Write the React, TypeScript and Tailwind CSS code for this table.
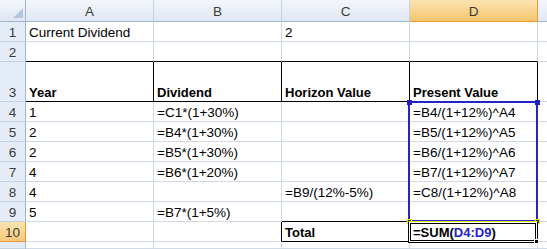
import React from 'react'

type Side = 'black' | undefined

type CellDef = {
  text?: React.ReactNode
  bold?: boolean
  r?: Side
  b?: Side
}

type RowDef = {
  n: number
  tall?: boolean
  short?: boolean
  active?: boolean
  cells: CellDef[]
}

const rows: RowDef[] = [
  { n: 1, cells: [{ text: 'Current Dividend' }, {}, { text: '2' }, {}] },
  { n: 2, cells: [{ b: 'black' }, { b: 'black' }, { b: 'black' }, { b: 'black' }] },
  {
    n: 3,
    tall: true,
    cells: [
      { text: 'Year', bold: true, r: 'black', b: 'black' },
      { text: 'Dividend', bold: true, r: 'black', b: 'black' },
      { text: 'Horizon Value', bold: true, r: 'black', b: 'black' },
      { text: 'Present Value', bold: true, r: 'black', b: 'black' },
    ],
  },
  { n: 4, cells: [{ text: '1' }, { text: '=C1*(1+30%)' }, {}, { text: '=B4/(1+12%)^A4' }] },
  { n: 5, cells: [{ text: '2' }, { text: '=B4*(1+30%)' }, {}, { text: '=B5/(1+12%)^A5' }] },
  { n: 6, cells: [{ text: '2' }, { text: '=B5*(1+30%)' }, {}, { text: '=B6/(1+12%)^A6' }] },
  { n: 7, cells: [{ text: '4' }, { text: '=B6*(1+20%)' }, {}, { text: '=B7/(1+12%)^A7' }] },
  { n: 8, cells: [{ text: '4' }, {}, { text: '=B9/(12%-5%)' }, { text: '=C8/(1+12%)^A8' }] },
  { n: 9, cells: [{ text: '5' }, { text: '=B7*(1+5%)' }, { b: 'black' }, { b: 'black' }] },
  {
    n: 10,
    active: true,
    cells: [
      {},
      { r: 'black' },
      { text: 'Total', bold: true, r: 'black', b: 'black' },
      {
        bold: true,
        b: 'black',
        text: (
          <>
            =SUM(<span className="text-[#2323c8]">D4:D9</span>)
          </>
        ),
      },
    ],
  },
  // only the top sliver of row 11 is in view
  { n: 11, short: true, cells: [{}, {}, {}, {}] },
]

function Cell({ cell }: { cell: CellDef }) {
  const right = cell.r === 'black' ? 'border-r-black' : 'border-r-[#d0d7e5]'
  const bottom = cell.b === 'black' ? 'border-b-black' : 'border-b-[#d0d7e5]'
  const weight = cell.bold ? 'font-bold text-[13px]' : 'text-[13.5px]'
  return (
    <div
      className={`w-[128px] shrink-0 h-full flex items-end pl-[3px] leading-4 whitespace-nowrap border-r border-b ${right} ${bottom} ${weight}`}
    >
      {cell.text}
    </div>
  )
}

function RowHead({ n, active, hidden }: { n: number; active?: boolean; hidden?: boolean }) {
  return (
    <div
      className={
        active
          ? 'w-[26px] shrink-0 h-full flex items-end justify-center leading-4 text-[13.5px] text-[#3a3a3a] border-r border-b border-r-[#f29536] border-b-[#f29536] bg-gradient-to-b from-[#fbe3b0] to-[#f8c977]'
          : 'w-[26px] shrink-0 h-full flex items-end justify-center leading-4 text-[13.5px] text-[#3a3a3a] border-r border-b border-r-[#9eb6ce] border-b-[#c5d2e2] bg-[#e4ecf7]'
      }
    >
      {hidden ? null : n}
    </div>
  )
}

function ColHead({ label, active }: { label: string; active?: boolean }) {
  return (
    <div
      className={
        active
          ? 'w-[128px] shrink-0 h-full flex items-end justify-center pb-[1px] leading-4 text-[13.5px] text-[#3a3a3a] border-r border-b border-r-[#f29536] border-b-[#f29536] bg-gradient-to-b from-[#fbe3b0] to-[#f5c56d]'
          : 'w-[128px] shrink-0 h-full flex items-end justify-center pb-[1px] leading-4 text-[13.5px] text-[#3a3a3a] border-r border-b border-r-[#c5d2e2] border-b-[#9eb6ce] bg-gradient-to-b from-[#f3f6fb] to-[#e0e8f3]'
      }
    >
      {label}
    </div>
  )
}

export default function App() {
  return (
    <div className="relative w-[547px] h-[249px] overflow-hidden bg-white text-black font-['Liberation_Sans',Arial,sans-serif]">
      {/* column headers */}
      <div className="flex h-[22px]">
        <div className="relative w-[26px] shrink-0 h-full border-r border-b border-r-[#9eb6ce] border-b-[#9eb6ce] bg-gradient-to-b from-[#f3f6fb] to-[#dfe6f1]">
          <svg className="absolute right-[2px] bottom-[3px]" width="10" height="10" viewBox="0 0 10 10">
            <polygon points="10,0 10,10 0,10" fill="#b4c5dc" />
          </svg>
        </div>
        <ColHead label="A" />
        <ColHead label="B" />
        <ColHead label="C" />
        <ColHead label="D" active />
        <div className="flex-1 h-full border-b border-b-[#9eb6ce] bg-gradient-to-b from-[#f3f6fb] to-[#e0e8f3]" />
      </div>

      {/* rows */}
      {rows.map((row) => (
        <div
          key={row.n}
          className={row.tall ? 'flex h-[40px]' : row.short ? 'flex h-[7px]' : 'flex h-[20px]'}
        >
          <RowHead n={row.n} active={row.active} hidden={row.short} />
          {row.cells.map((c, i) => (
            <Cell key={i} cell={c} />
          ))}
          <div className="flex-1 h-full border-b border-b-[#d0d7e5]" />
        </div>
      ))}

      {/* referenced range D4:D9 */}
      <div className="absolute left-[408px] top-[101px] w-[130px] h-[121px] border-2 border-[#2525c4]" />
      <div className="absolute left-[407px] top-[100px] w-[5px] h-[5px] bg-[#1f1fc0]" />
      <div className="absolute left-[535px] top-[100px] w-[5px] h-[5px] bg-[#1f1fc0]" />
      <div className="absolute left-[407px] top-[219px] w-[5px] h-[5px] bg-[#2a2a90] border border-[#e8e800]" />
      <div className="absolute left-[535px] top-[219px] w-[5px] h-[5px] bg-[#2a2a90] border border-[#e8e800]" />

      {/* active cell D10 */}
      <div className="absolute left-[408px] top-[221px] w-[130px] h-[22px] border border-black border-t-[#e8e800] shadow-[inset_0_0_0_1px_white,inset_0_0_0_2px_black]" />
      <div className="absolute left-[534px] top-[239px] w-[5px] h-[5px] bg-black border border-white" />
    </div>
  )
}
